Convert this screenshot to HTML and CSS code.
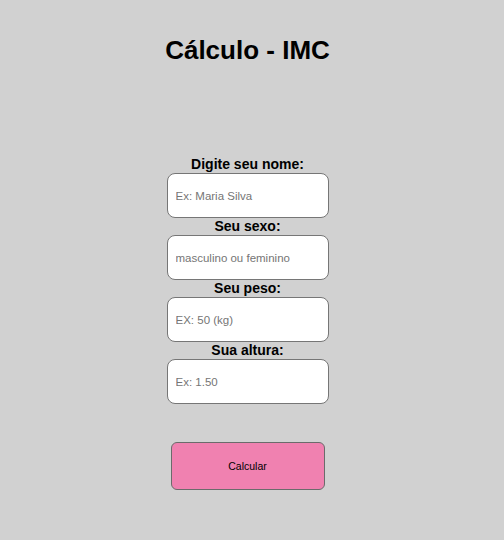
FILE: index.html
```html
<!DOCTYPE html>
<html lang="pt">
<head>
<meta charset="utf-8">
<title>Cálculo - IMC</title>
<link rel="stylesheet" href="styles.css">
</head>
<body>
<main class="page">
  <h1 class="title">Cálculo - IMC</h1>
  <form class="form">
    <label class="label" for="nome">Digite seu nome:</label>
    <input class="field" id="nome" type="text" placeholder="Ex: Maria Silva">
    <label class="label" for="sexo">Seu sexo:</label>
    <input class="field" id="sexo" type="text" placeholder="masculino ou feminino">
    <label class="label" for="peso">Seu peso:</label>
    <input class="field" id="peso" type="text" placeholder="EX: 50 (kg)">
    <label class="label" for="altura">Sua altura:</label>
    <input class="field" id="altura" type="text" placeholder="Ex: 1.50">
    <button class="btn" type="button">Calcular</button>
  </form>
</main>
</body>
</html>
```
FILE: styles.css
```css
html, body {
  margin: 0;
  padding: 0;
  background: #d1d1d1;
  font-family: "Liberation Sans", Arial, sans-serif;
}
.page {
  display: flex;
  flex-direction: column;
  align-items: center;
  padding-top: 35px;
  padding-right: 9px;
}
.title {
  margin: 0;
  font-size: 26px;
  line-height: 30px;
  font-weight: bold;
  color: #000;
}
.form {
  display: flex;
  flex-direction: column;
  align-items: center;
  margin-top: 91px;
}
.label {
  display: block;
  font-size: 14px;
  line-height: 17px;
  font-weight: bold;
  color: #000;
}
.field {
  box-sizing: border-box;
  width: 162px;
  height: 45px;
  margin: 0;
  padding: 0 8px;
  border: 1px solid #767676;
  border-radius: 8px;
  background: #fff;
  font-family: "Liberation Sans", Arial, sans-serif;
  font-size: 11.5px;
  color: #000;
  outline: none;
}
.field::placeholder {
  color: #757575;
}
.btn {
  box-sizing: border-box;
  width: 154px;
  height: 48px;
  margin-top: 38px;
  border: 1px solid #6b6b6b;
  border-radius: 6px;
  background: #f081b0;
  font-family: "Liberation Sans", Arial, sans-serif;
  font-size: 10.5px;
  color: #000;
}
```
